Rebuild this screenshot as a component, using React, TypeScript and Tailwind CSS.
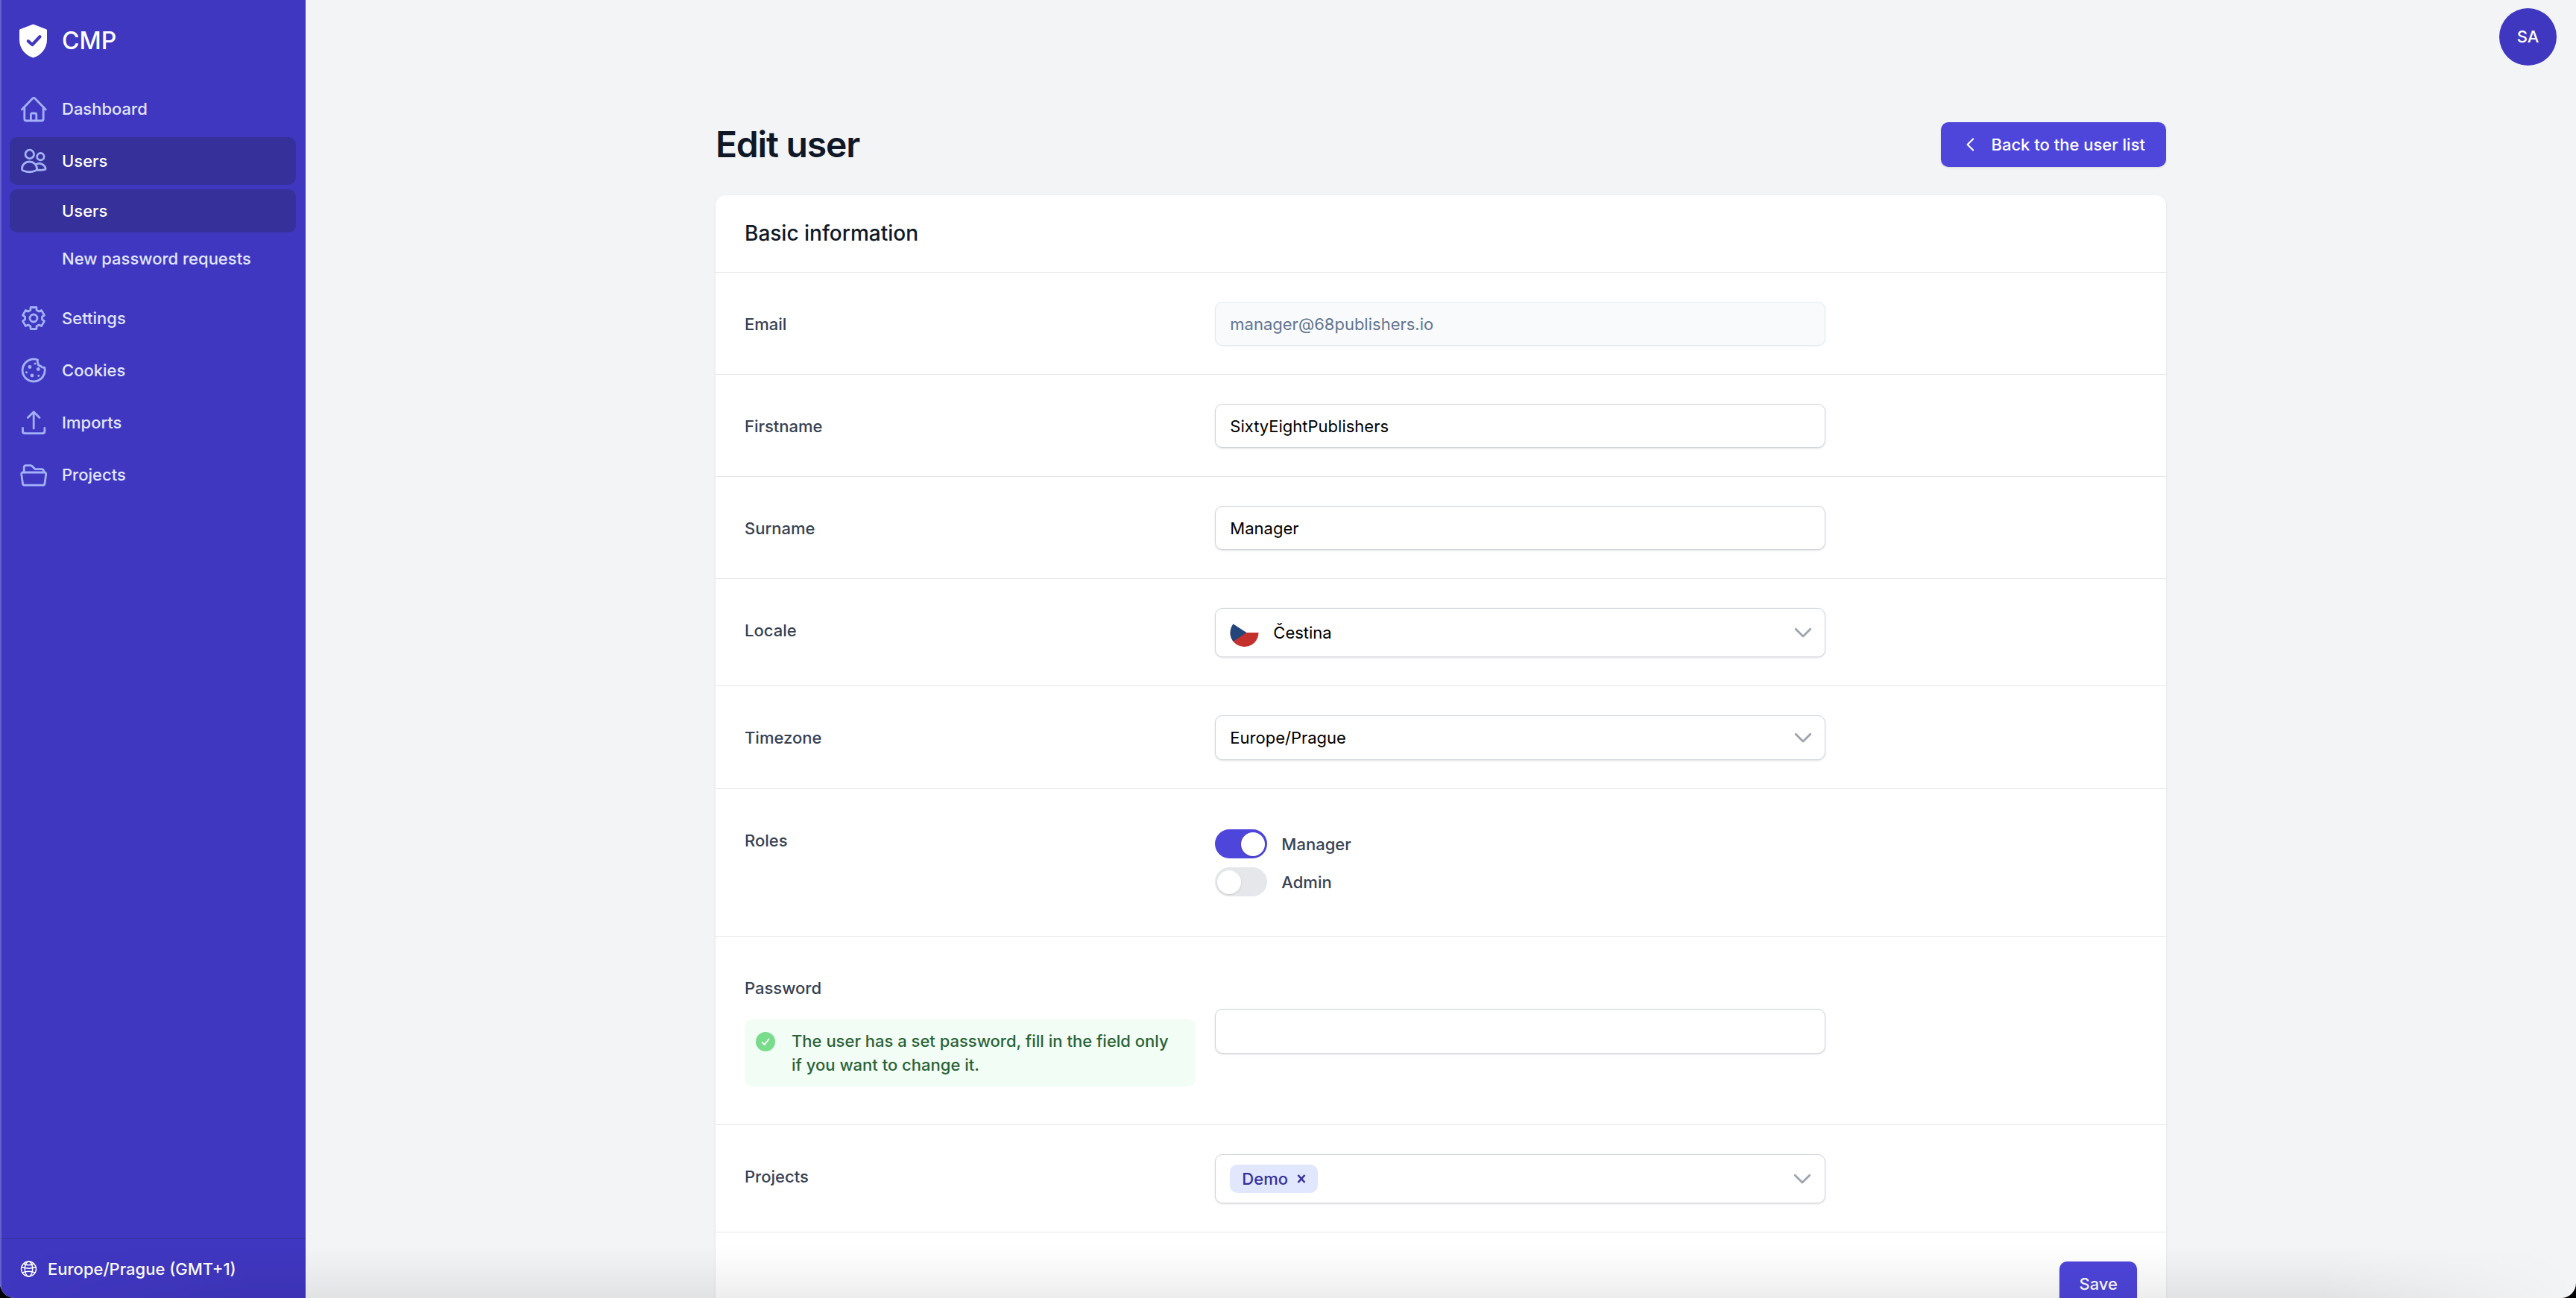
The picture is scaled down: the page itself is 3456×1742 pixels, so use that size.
import { useState, type ReactNode } from "react";

function Icon({ children }: { children: ReactNode }) {
  return (
    <svg
      viewBox="0 0 39 39"
      className="size-[39px] shrink-0 text-[#a3b1f8]"
      fill="none"
      stroke="currentColor"
      strokeWidth="2.8"
      strokeLinecap="round"
      strokeLinejoin="round"
      aria-hidden="true"
    >
      {children}
    </svg>
  );
}

const HomeIcon = () => (
  <Icon>
    <path d="M3.3 20 L17.6 5.2 Q19.3 3.6 21 5.2 L35.3 20" />
    <path d="M6.8 17 V32.5 Q6.8 35 9.3 35 H29.7 Q32.2 35 32.2 32.5 V17" />
    <path d="M15.4 35 V27 Q15.4 25 17.4 25 H20.8 Q22.8 25 22.8 27 V35" />
  </Icon>
);

const UsersIcon = () => (
  <Icon>
    <circle cx="13.8" cy="10" r="5.8" />
    <circle cx="28.4" cy="13.2" r="4.7" />
    <path d="M3.4 29.5 C3.4 24 8 20 13.6 20 C19 20 23.6 24 23.6 29.5 C23.6 31 22.8 31.6 21.8 32 C17 34 10 34 5.2 32 C4 31.5 3.4 31 3.4 29.5 Z" />
    <path d="M21.8 24 C26 20.8 33 22.5 35 28.5 C35.3 29.7 34.7 30.3 33.7 30.6 C31 31.3 27 31.5 23.5 31" />
  </Icon>
);

const gearPath = (() => {
  const points: string[] = [];
  for (let tooth = 0; tooth < 6; tooth++) {
    const corners: [number, number][] = [
      [-21, 11.6],
      [-15, 15],
      [15, 15],
      [21, 11.6],
    ];
    for (const [offset, radius] of corners) {
      const angle = ((tooth * 60 - 90 + offset) * Math.PI) / 180;
      points.push(
        `${(19 + radius * Math.cos(angle)).toFixed(2)} ${(19 + radius * Math.sin(angle)).toFixed(2)}`,
      );
    }
  }
  return `M${points.join(" L")} Z`;
})();

const SettingsIcon = () => (
  <Icon>
    <path d={gearPath} />
    <circle cx="19" cy="19" r="5" />
  </Icon>
);

const CookieIcon = () => (
  <Icon>
    <path d="M24.6 5 A15 15 0 1 0 33.7 15.2 Q30.5 15.8 29 13.5 Q25 13 25 9.5 Q23.8 7.5 24.6 5 Z" />
    <g fill="currentColor" stroke="none">
      <circle cx="14" cy="14.5" r="2.4" />
      <circle cx="25.3" cy="17.5" r="2.4" />
      <circle cx="17" cy="26" r="2.4" />
      <circle cx="9.5" cy="21.8" r="1.5" />
      <circle cx="25.8" cy="26.3" r="1.5" />
      <circle cx="21" cy="10" r="1.5" />
    </g>
  </Icon>
);

const UploadIcon = () => (
  <Icon>
    <path d="M19.2 27 V5 M11.4 12.6 L19.2 4.8 L27 12.6" />
    <path d="M4.5 26.5 V30.5 Q4.5 33.7 7.7 33.7 H30.7 Q33.9 33.7 33.9 30.5 V26.5" />
  </Icon>
);

const FolderIcon = () => (
  <Icon>
    <path d="M5 16 H33.5 Q36 16 35.7 18.7 L34 31 Q33.7 33.2 31.5 33.2 H7 Q4.8 33.2 4.5 31 L2.8 18.7 Q2.5 16 5 16 Z" />
    <path d="M6.2 16 V9.5 Q6.2 6.6 9 6.6 H14.5 Q16 6.6 17 7.6 L21 11.6 H30 Q32.6 11.6 33 15.5" />
  </Icon>
);

const GlobeIcon = () => (
  <svg viewBox="0 0 24 24" className="size-6 shrink-0" fill="none" stroke="currentColor" strokeWidth="1.5" aria-hidden="true">
    <circle cx="12.5" cy="12" r="10" />
    <ellipse cx="12.5" cy="12" rx="5.2" ry="10" />
    <path d="M3 9.5 Q12.5 13 22 9.5 M4 17 Q12.5 13.5 21 17 M5.5 5 Q12.5 8.5 19.5 5" />
  </svg>
);

const ShieldLogo = () => (
  <svg viewBox="0 0 39 46" className="h-[46px] w-[39px] shrink-0" aria-hidden="true">
    <path d="M18.5 0.5 L36 7.2 Q37 7.6 37 8.8 V21 C37 33 29.5 42 18.5 45.5 C7.5 42 0 33 0 21 V8.8 Q0 7.6 1 7.2 Z" fill="#fff" />
    <path d="M11.8 23.2 L17.3 28 L27.5 17.3" fill="none" stroke="#4037c1" strokeWidth="4.2" strokeLinecap="round" strokeLinejoin="round" />
  </svg>
);

const ChevronDown = () => (
  <svg
    viewBox="0 0 24 14"
    className="pointer-events-none absolute top-1/2 right-[18px] h-3.5 w-6 -translate-y-1/2 text-[#9ca3af]"
    fill="none"
    stroke="currentColor"
    strokeWidth="2.8"
    strokeLinecap="round"
    strokeLinejoin="round"
    aria-hidden="true"
  >
    <path d="M2.2 2.2 L12 12 L21.8 2.2" />
  </svg>
);

const CzechFlag = () => (
  <svg viewBox="0 0 40 40" className="pointer-events-none absolute top-1/2 left-5 size-[39px] -translate-y-1/2" aria-hidden="true">
    <defs>
      <clipPath id="flag-disc">
        <circle cx="20" cy="20" r="19.5" />
      </clipPath>
    </defs>
    <g clipPath="url(#flag-disc)">
      <path d="M0 0 H40 V20 H0 Z" fill="#fff" />
      <path d="M0 20 H40 V40 H0 Z" fill="#c4302b" />
      <path d="M0 5 L23 20 L0 35 Z" fill="#24457a" />
    </g>
  </svg>
);

function NavItem({ label, icon, active }: { label: string; icon: ReactNode; active?: boolean }) {
  return (
    <a
      href="#"
      className={`flex h-16 items-center gap-[18px] rounded-[10px] px-[13px] ${
        active ? "bg-[#36309a] text-white" : "text-[#e0e7ff]"
      }`}
    >
      {icon}
      {label}
    </a>
  );
}

function SubItem({ label, active }: { label: string; active?: boolean }) {
  return (
    <a
      href="#"
      className={`flex h-[58px] items-center rounded-[10px] pl-[70px] ${
        active ? "bg-[#36309a] text-white" : "text-[#e0e7ff]"
      }`}
    >
      {label}
    </a>
  );
}

function Sidebar() {
  return (
    <aside className="flex w-[410px] shrink-0 flex-col bg-[#4037c1] font-medium">
      <div className="flex items-center gap-[18px] px-[26px] pt-8">
        <ShieldLogo />
        <span className="text-[32px] leading-[44px] text-white">CMP</span>
      </div>
      <nav className="mt-9 flex flex-1 flex-col gap-1.5 px-[13px]">
        <NavItem label="Dashboard" icon={<HomeIcon />} />
        <NavItem label="Users" icon={<UsersIcon />} active />
        <div className="mb-[13px] flex flex-col gap-1.5">
          <SubItem label="Users" active />
          <SubItem label="New password requests" />
        </div>
        <NavItem label="Settings" icon={<SettingsIcon />} />
        <NavItem label="Cookies" icon={<CookieIcon />} />
        <NavItem label="Imports" icon={<UploadIcon />} />
        <NavItem label="Projects" icon={<FolderIcon />} />
      </nav>
      <div className="flex h-20 items-center gap-3.5 border-t border-[#36309a] px-[26px] text-white">
        <GlobeIcon />
        Europe/Prague (GMT+1)
      </div>
    </aside>
  );
}

function Row({ label, htmlFor, note, children }: { label: string; htmlFor?: string; note?: ReactNode; children: ReactNode }) {
  return (
    <div className="grid grid-cols-3 gap-[26px] border-t border-gray-200 px-[39px] pt-[39px] pb-[38px]">
      <div className="pt-3.5">
        {htmlFor ? (
          <label htmlFor={htmlFor} className="block font-medium text-gray-700">
            {label}
          </label>
        ) : (
          <span className="block font-medium text-gray-700">{label}</span>
        )}
        {note}
      </div>
      <div className="col-span-2 self-center">{children}</div>
    </div>
  );
}

const fieldClass =
  "block w-full max-w-[819px] rounded-[10px] border border-gray-300 bg-white px-[19px] text-black shadow-sm outline-none";

function TextField({ label, id, value, disabled }: { label: string; id: string; value: string; disabled?: boolean }) {
  return (
    <Row label={label} htmlFor={id}>
      <input
        id={id}
        type="text"
        defaultValue={value}
        disabled={disabled}
        className={
          disabled
            ? "block h-[59px] w-full max-w-[819px] rounded-[10px] border border-slate-200 bg-slate-50 px-[19px] text-slate-500 shadow-xs"
            : `${fieldClass} h-[59px]`
        }
      />
    </Row>
  );
}

function Toggle({ label, initial }: { label: string; initial: boolean }) {
  const [on, setOn] = useState(initial);
  return (
    <label className="flex w-fit items-center gap-[19px] font-medium text-gray-700">
      <input type="checkbox" role="switch" checked={on} onChange={() => setOn(!on)} className="peer sr-only" />
      <span className="flex h-[39px] w-[70px] items-center rounded-full bg-gray-200 p-[3px] peer-checked:justify-end peer-checked:bg-[#4e45db]">
        <span className="size-8 rounded-full bg-white shadow" />
      </span>
      {label}
    </label>
  );
}

export default function App() {
  return (
    <div className="h-screen bg-black font-[Inter,sans-serif] text-[22px] leading-8">
      <div className="relative flex h-full overflow-hidden rounded-b-[20px] bg-gray-100">
        <Sidebar />
        <main className="flex-1 overflow-hidden">
          <header className="flex h-[98px] items-center justify-end px-[26px]">
            <button type="button" className="size-[77px] rounded-full bg-[#4037c1] font-medium text-white">
              SA
            </button>
          </header>
          <div className="mx-auto mt-[66px] max-w-[1946px]">
            <div className="flex items-center justify-between">
              <h1 className="text-[48px] leading-[60px] font-semibold tracking-tight text-gray-900">Edit user</h1>
              <a href="#" className="flex h-[60px] items-center gap-[13px] rounded-[10px] bg-[#4e45db] px-7 font-medium text-white shadow-sm">
                <svg viewBox="0 0 24 24" className="size-[26px]" fill="none" stroke="currentColor" strokeWidth="2" strokeLinecap="round" strokeLinejoin="round" aria-hidden="true">
                  <path d="M14 19 L7 12 L14 5" />
                </svg>
                Back to the user list
              </a>
            </div>
            <form className="mt-[38px] rounded-[13px] bg-white shadow" onSubmit={(e) => e.preventDefault()}>
              <h2 className="px-[39px] pt-[31px] pb-8 text-[28px] leading-10 font-medium text-gray-900">Basic information</h2>
              <TextField label="Email" id="email" value="manager@68publishers.io" disabled />
              <TextField label="Firstname" id="firstname" value="SixtyEightPublishers" />
              <TextField label="Surname" id="surname" value="Manager" />
              <Row label="Locale" htmlFor="locale">
                <div className="relative max-w-[819px]">
                  <select id="locale" className={`${fieldClass} h-[66px] appearance-none pl-[77px]`}>
                    <option>Čestina</option>
                  </select>
                  <CzechFlag />
                  <ChevronDown />
                </div>
              </Row>
              <Row label="Timezone" htmlFor="timezone">
                <div className="relative max-w-[819px]">
                  <select id="timezone" className={`${fieldClass} h-[60px] appearance-none`}>
                    <option>Europe/Prague</option>
                  </select>
                  <ChevronDown />
                </div>
              </Row>
              <Row label="Roles">
                <div className="flex flex-col gap-3 py-[15px]">
                  <Toggle label="Manager" initial={true} />
                  <Toggle label="Admin" initial={false} />
                </div>
              </Row>
              <Row
                label="Password"
                htmlFor="password"
                note={
                  <div className="mt-[26px] mb-[13px] flex gap-[22px] rounded-[10px] bg-[#f2fdf5] py-[13px] pr-[26px] pl-[15px] font-medium text-[#2b6236]">
                    <svg viewBox="0 0 26 26" className="mt-1 size-[26px] shrink-0" aria-hidden="true">
                      <circle cx="13" cy="13" r="13" fill="#78dc8c" />
                      <path d="M8.8 14 L11.8 17 L17.5 9.5" fill="none" stroke="#fff" strokeWidth="1.8" strokeLinecap="round" strokeLinejoin="round" />
                    </svg>
                    <p>The user has a set password, fill in the field only if you want to change it.</p>
                  </div>
                }
              >
                <input id="password" type="password" className={`${fieldClass} h-[60px]`} />
              </Row>
              <Row label="Projects">
                <div className={`${fieldClass} relative flex h-[66px] items-center`}>
                  <span className="flex h-[38px] items-center gap-3 rounded-[10px] bg-[#e0e7ff] px-4 font-medium text-[#36309a]">
                    Demo
                    <button type="button" aria-label="Remove Demo">
                      <svg viewBox="0 0 12 12" className="size-3" stroke="currentColor" strokeWidth="2.6" aria-hidden="true">
                        <path d="M1.5 1 L10.5 11 M10.5 1 L1.5 11" />
                      </svg>
                    </button>
                  </span>
                  <ChevronDown />
                </div>
              </Row>
              <div className="flex justify-end border-t border-gray-200 p-[39px]">
                <button type="submit" className="h-[60px] rounded-[10px] bg-[#4e45db] px-[26px] font-medium text-white shadow-sm">
                  Save
                </button>
              </div>
            </form>
          </div>
        </main>
        <div className="pointer-events-none absolute inset-y-0 left-0 w-0.5 bg-white/20" />
        <div className="pointer-events-none absolute inset-x-0 bottom-0 h-[70px] bg-linear-to-t from-black/7 via-black/3 to-transparent mask-x-from-90% mask-x-to-100%" />
      </div>
    </div>
  );
}
